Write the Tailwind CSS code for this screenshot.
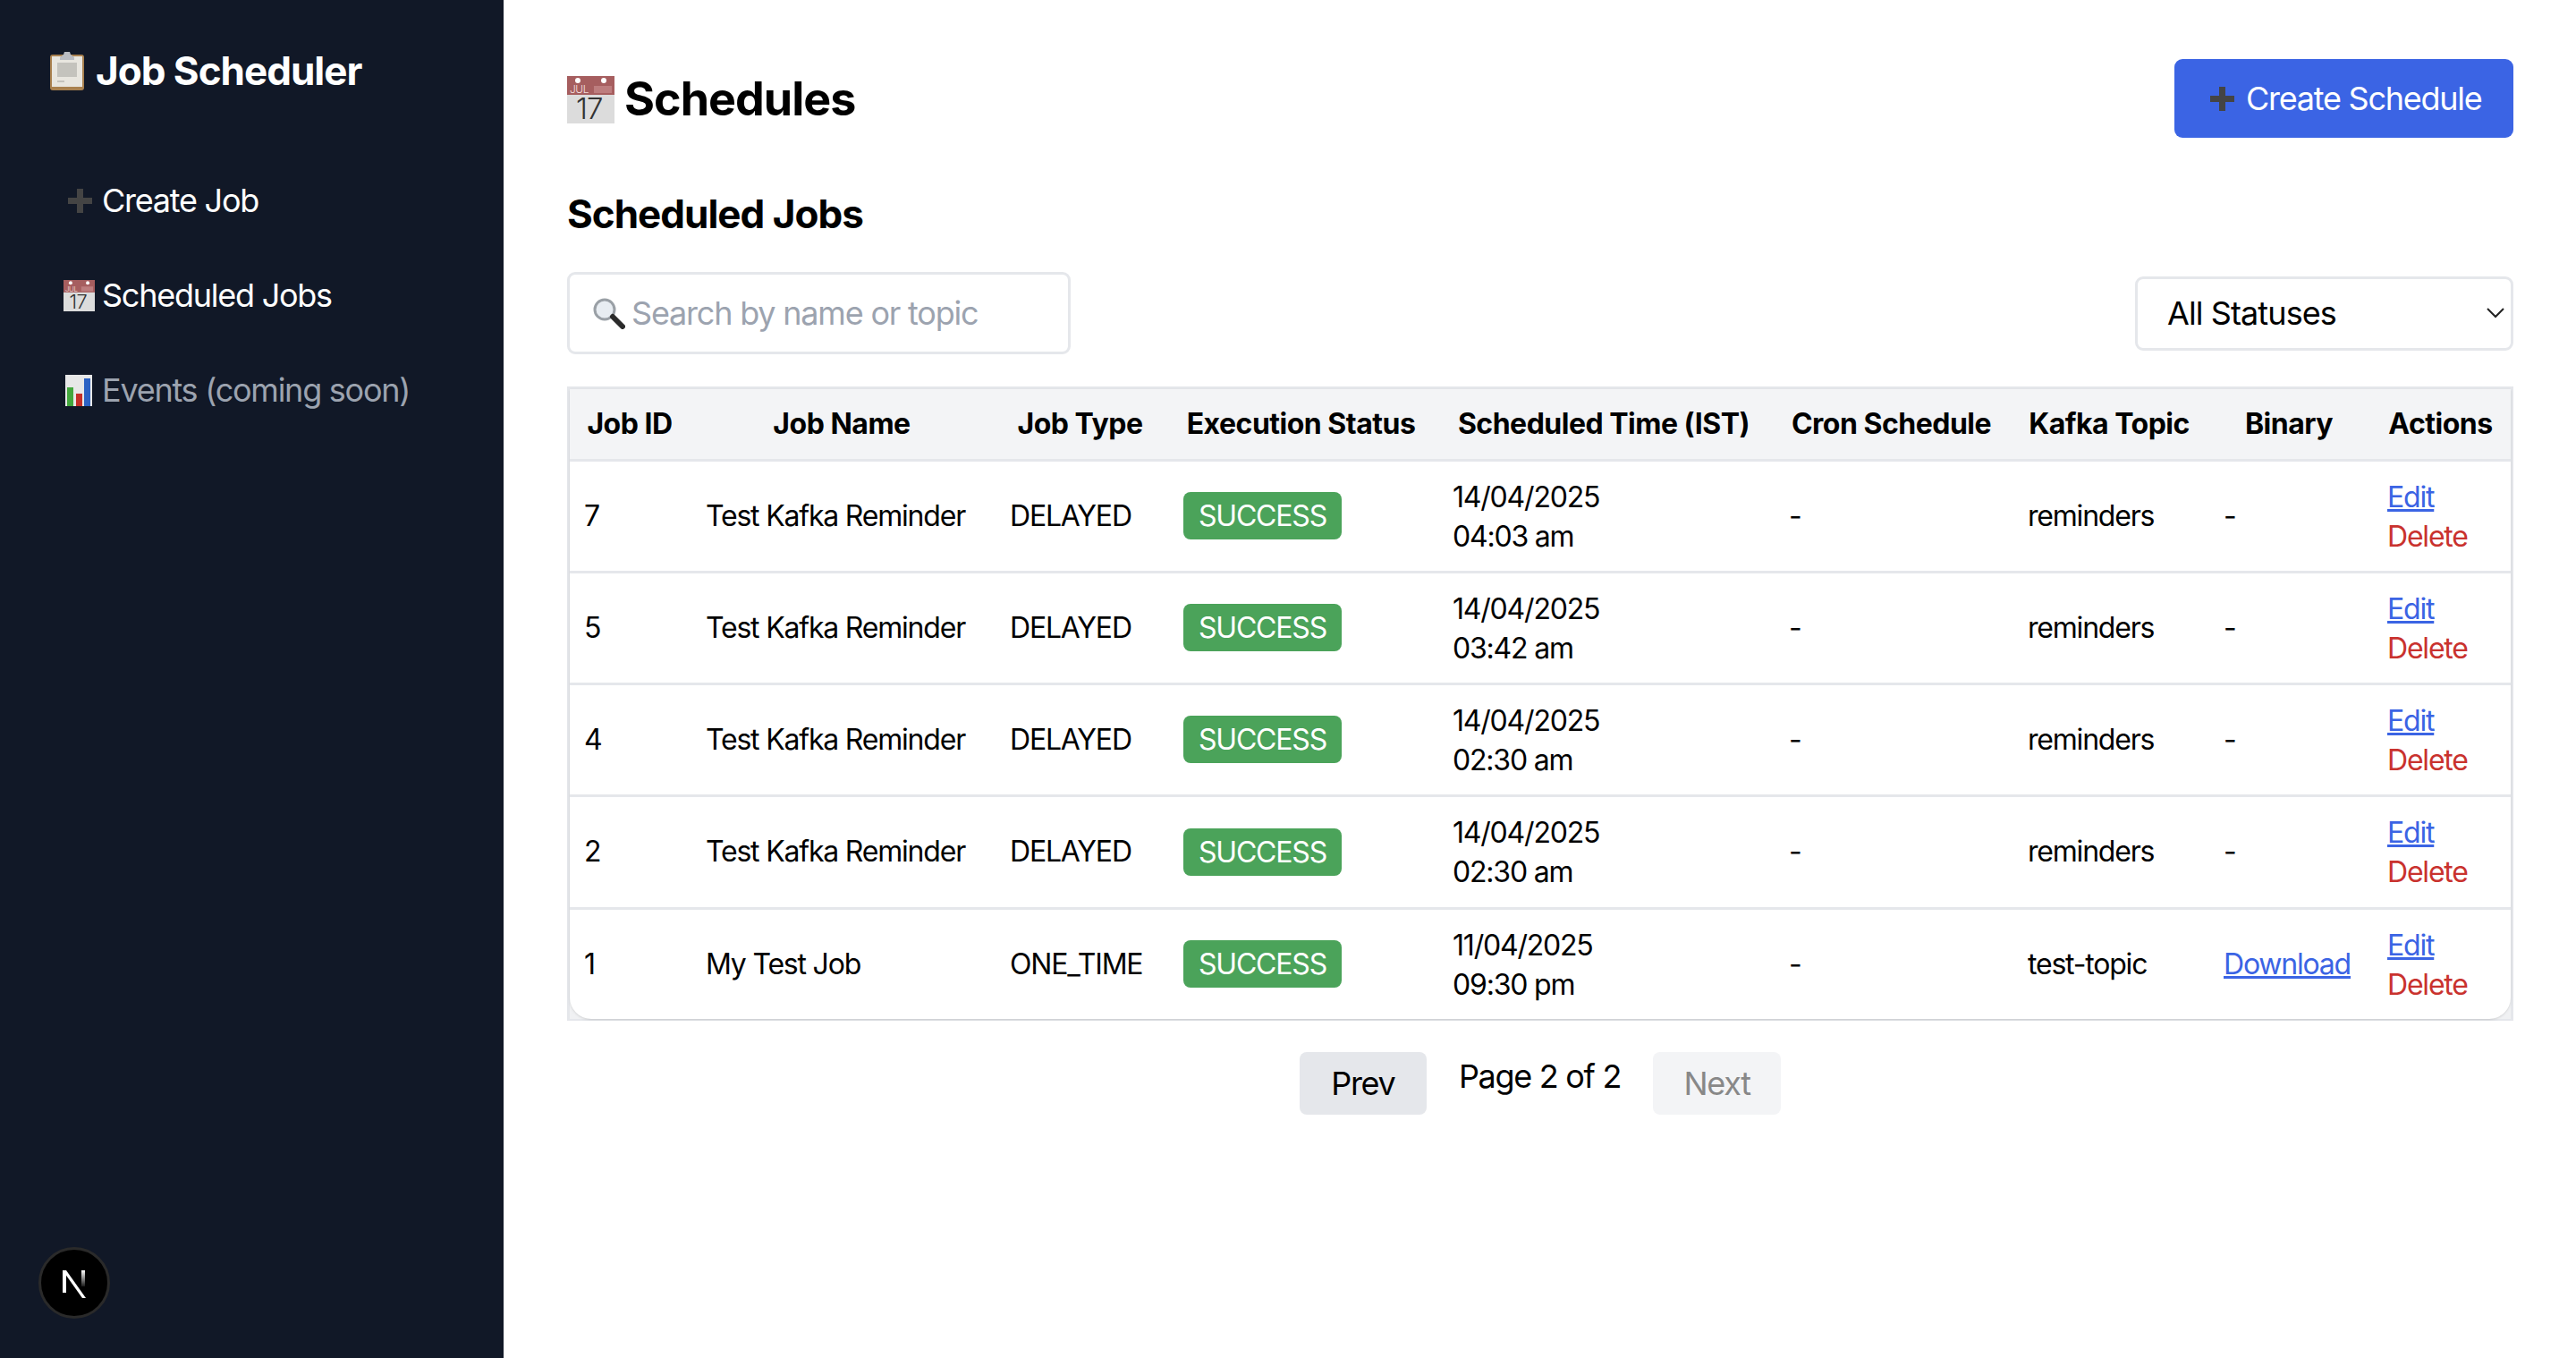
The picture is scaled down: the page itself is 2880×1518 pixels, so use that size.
<!doctype html>
<html lang="en">
<head>
    <meta charset="UTF-8">
    <title>Job Scheduler</title>
    <script src="https://cdn.jsdelivr.net/npm/@tailwindcss/browser@4"></script>
</head>
<body class="bg-white text-black font-['Inter',sans-serif]">
<svg class="hidden">
    <symbol id="calendar" viewBox="0 0 53 53">
        <rect width="53" height="53" fill="#dcdcdc"/>
        <rect width="53" height="21" fill="#a65e5f"/>
        <circle cx="12" cy="5" r="3" fill="#fff"/>
        <circle cx="41" cy="5" r="3" fill="#fff"/>
        <text x="3" y="19" font-size="12" font-weight="300" fill="#f3dede" font-family="Inter" letter-spacing="-0.5">JUL</text>
        <rect x="30" y="11" width="20" height="8" fill="#bd7d7e"/>
        <text x="10" y="48" font-size="33" font-weight="300" fill="#333" font-family="Inter" letter-spacing="-1">17</text>
    </symbol>
    <symbol id="plus" viewBox="0 0 27 27">
        <path d="M10 0h7v10h10v7H17v10h-7V17H0v-7h10z" fill="#444"/>
    </symbol>
</svg>
<div class="flex h-[1518px]">
    <aside class="w-[563px] bg-[#111827] text-white pt-[52px] pl-[56px]">
        <div class="flex items-center h-[54px] gap-[13px] text-[44px] font-bold tracking-[-1px]">
            <svg class="w-[38px] h-[44px]" viewBox="0 0 38 44">
                <rect y="4" width="38" height="40" rx="3" fill="#a9814f"/>
                <rect x="2" y="6" width="34" height="34" fill="#e8e6df"/>
                <rect x="8" y="13" width="22" height="16" fill="#c4c3bd"/>
                <rect x="8" y="33" width="8" height="2" fill="#c4c3bd"/>
                <path d="M11 7l4-3 1-3h6l1 3 4 3v3H11z" fill="#b9bcc2"/>
            </svg>
            <span>Job Scheduler</span>
        </div>
        <nav class="mt-[97px] flex flex-col gap-[64px] text-[36px] leading-[42px] tracking-[-1.25px]">
            <a class="flex items-center h-[42px]">
                <span class="w-[58px] flex justify-end pr-[11px]"><svg class="w-[27px] h-[27px]"><use href="#plus"/></svg></span>
                <span>Create Job</span>
            </a>
            <a class="flex items-center h-[42px]">
                <span class="w-[58px] flex justify-end pr-[8px]"><svg class="w-[35px] h-[35px]"><use href="#calendar"/></svg></span>
                <span>Scheduled Jobs</span>
            </a>
            <a class="flex items-center h-[42px] text-[#9ca3af]">
                <span class="w-[58px] flex justify-end pr-[11px]">
                    <svg class="w-[30px] h-[35px]" viewBox="0 0 30 35">
                        <rect width="30" height="35" fill="#e8e8e8"/>
                        <rect x="2" y="14" width="7" height="21" fill="#43a73d"/>
                        <rect x="12" y="21" width="7" height="14" fill="#c62f28"/>
                        <rect x="21" y="4" width="7" height="31" fill="#2c62c4"/>
                    </svg>
                </span>
                <span>Events (coming soon)</span>
            </a>
        </nav>
    </aside>

    <main class="flex-1 pt-[66px] pl-[71px] pr-[70px]">
        <div class="flex justify-between items-center h-[88px]">
            <h1 class="flex items-center gap-[11px] text-[52px] font-bold tracking-[-1px]">
                <svg class="w-[53px] h-[53px] mt-[2px]"><use href="#calendar"/></svg>
                <span class="mt-[2px]">Schedules</span>
            </h1>
            <button class="flex items-center gap-[13px] h-[88px] w-[379px] pl-[40px] bg-[#3b64e4] text-white text-[36px] tracking-[-1.25px] rounded-[9px]">
                <svg class="w-[27px] h-[27px]"><use href="#plus"/></svg>
                <span>Create Schedule</span>
            </button>
        </div>

        <h2 class="mt-[58px] text-[44px] leading-[54px] font-bold tracking-[-1px]">Scheduled Jobs</h2>

        <div class="mt-[38px] flex justify-between items-center">
            <div class="flex items-center w-[563px] h-[92px] pl-[26px] gap-[7px] border-[3px] border-[#e5e7eb] rounded-[9px]">
                <svg class="w-[36px] h-[35px]" viewBox="0 0 36 35">
                    <circle cx="13" cy="13" r="11" fill="#e8edf2" stroke="#9aa0a6" stroke-width="3"/>
                    <path d="M22 21l11 11" stroke="#2b2b2b" stroke-width="6" stroke-linecap="round"/>
                </svg>
                <input class="w-[440px] text-[36px] tracking-[-1.2px] outline-none placeholder:text-[#9ca3af]" placeholder="Search by name or topic">
            </div>
            <div class="relative">
                <select class="appearance-none block w-[423px] h-[83px] pl-[33px] text-[36px] tracking-[-0.9px] bg-white border-[3px] border-[#e5e7eb] rounded-[9px]">
                    <option>All Statuses</option>
                </select>
                <svg class="absolute right-[10px] top-[35px] w-[20px] h-[12px]" viewBox="0 0 20 12" fill="none" stroke="#222" stroke-width="2"><path d="M1 1l9 9 9-9"/></svg>
            </div>
        </div>

        <div class="mt-[36px] border-x-[3px] border-t-[3px] border-b-[2px] border-[#e5e7eb] bg-[#f0f1f3]">
            <div class="bg-white rounded-br-[24px] rounded-bl-[24px] overflow-hidden shadow-sm">
                <table class="w-[2170px] table-fixed border-collapse text-[32px] leading-[44px] tracking-[-1.2px]">
                    <colgroup>
                        <col class="w-[134px]"><col class="w-[340px]"><col class="w-[193px]"><col class="w-[301px]"><col class="w-[376px]"><col class="w-[267px]"><col class="w-[220px]"><col class="w-[182px]"><col class="w-[157px]">
                    </colgroup>
                    <thead class="bg-[#f3f4f6] border-b-[3px] border-[#e5e7eb] h-[79px]">
                        <tr class="tracking-[-0.5px]">
                            <th class="font-bold">Job ID</th>
                            <th class="font-bold">Job Name</th>
                            <th class="font-bold">Job Type</th>
                            <th class="font-bold">Execution Status</th>
                            <th class="font-bold">Scheduled Time (IST)</th>
                            <th class="font-bold">Cron Schedule</th>
                            <th class="font-bold">Kafka Topic</th>
                            <th class="font-bold">Binary</th>
                            <th class="font-bold">Actions</th>
                        </tr>
                    </thead>
                    <tbody>
                        <tr class="h-[125px] border-b-[3px] border-[#e5e7eb]">
                            <td class="pl-[16px]">7</td>
                            <td class="pl-[18px]">Test Kafka Reminder</td>
                            <td class="pl-[18px]">DELAYED</td>
                            <td class="pl-[19px]"><span class="inline-block w-[177px] h-[53px] leading-[53px] text-center bg-[#4ba35a] text-white rounded-[8px]">SUCCESS</span></td>
                            <td class="pl-[19px] pt-[2px]">14/04/2025<br>04:03 am</td>
                            <td class="pl-[19px]">-</td>
                            <td class="pl-[19px]">reminders</td>
                            <td class="pl-[18px]">-</td>
                            <td class="pl-[19px] pt-[2px]"><a class="block text-[#3b64e4] underline">Edit</a><a class="block text-[#c9322e]">Delete</a></td>
                        </tr>
                        <tr class="h-[125px] border-b-[3px] border-[#e5e7eb]">
                            <td class="pl-[16px]">5</td>
                            <td class="pl-[18px]">Test Kafka Reminder</td>
                            <td class="pl-[18px]">DELAYED</td>
                            <td class="pl-[19px]"><span class="inline-block w-[177px] h-[53px] leading-[53px] text-center bg-[#4ba35a] text-white rounded-[8px]">SUCCESS</span></td>
                            <td class="pl-[19px] pt-[2px]">14/04/2025<br>03:42 am</td>
                            <td class="pl-[19px]">-</td>
                            <td class="pl-[19px]">reminders</td>
                            <td class="pl-[18px]">-</td>
                            <td class="pl-[19px] pt-[2px]"><a class="block text-[#3b64e4] underline">Edit</a><a class="block text-[#c9322e]">Delete</a></td>
                        </tr>
                        <tr class="h-[125px] border-b-[3px] border-[#e5e7eb]">
                            <td class="pl-[16px]">4</td>
                            <td class="pl-[18px]">Test Kafka Reminder</td>
                            <td class="pl-[18px]">DELAYED</td>
                            <td class="pl-[19px]"><span class="inline-block w-[177px] h-[53px] leading-[53px] text-center bg-[#4ba35a] text-white rounded-[8px]">SUCCESS</span></td>
                            <td class="pl-[19px] pt-[2px]">14/04/2025<br>02:30 am</td>
                            <td class="pl-[19px]">-</td>
                            <td class="pl-[19px]">reminders</td>
                            <td class="pl-[18px]">-</td>
                            <td class="pl-[19px] pt-[2px]"><a class="block text-[#3b64e4] underline">Edit</a><a class="block text-[#c9322e]">Delete</a></td>
                        </tr>
                        <tr class="h-[126px] border-b-[3px] border-[#e5e7eb]">
                            <td class="pl-[16px]">2</td>
                            <td class="pl-[18px]">Test Kafka Reminder</td>
                            <td class="pl-[18px]">DELAYED</td>
                            <td class="pl-[19px]"><span class="inline-block w-[177px] h-[53px] leading-[53px] text-center bg-[#4ba35a] text-white rounded-[8px]">SUCCESS</span></td>
                            <td class="pl-[19px] pt-[2px]">14/04/2025<br>02:30 am</td>
                            <td class="pl-[19px]">-</td>
                            <td class="pl-[19px]">reminders</td>
                            <td class="pl-[18px]">-</td>
                            <td class="pl-[19px] pt-[2px]"><a class="block text-[#3b64e4] underline">Edit</a><a class="block text-[#c9322e]">Delete</a></td>
                        </tr>
                        <tr class="h-[124px]">
                            <td class="pl-[16px]">1</td>
                            <td class="pl-[18px]">My Test Job</td>
                            <td class="pl-[18px]">ONE_TIME</td>
                            <td class="pl-[19px]"><span class="inline-block w-[177px] h-[53px] leading-[53px] text-center bg-[#4ba35a] text-white rounded-[8px]">SUCCESS</span></td>
                            <td class="pl-[19px] pt-[2px]">11/04/2025<br>09:30 pm</td>
                            <td class="pl-[19px]">-</td>
                            <td class="pl-[19px]">test-topic</td>
                            <td class="pl-[18px]"><a class="text-[#3b64e4] underline">Download</a></td>
                            <td class="pl-[19px] pt-[2px]"><a class="block text-[#3b64e4] underline">Edit</a><a class="block text-[#c9322e]">Delete</a></td>
                        </tr>
                    </tbody>
                </table>
            </div>
        </div>

        <div class="mt-[35px] flex justify-center gap-[36px] text-[36px] tracking-[-1.3px]">
            <button class="w-[142px] h-[70px] bg-[#e5e7eb] rounded-[8px]">Prev</button>
            <span class="leading-[54px]">Page 2 of 2</span>
            <button class="w-[143px] h-[70px] bg-[#f3f4f6] text-[#888] rounded-[8px]">Next</button>
        </div>
    </main>
</div>

<div class="fixed left-[43px] top-[1394px] w-[80px] h-[80px] rounded-full bg-black border-[3px] border-[#2a2a2a] flex items-center justify-center">
    <svg class="w-[30px] h-[34px]" viewBox="0 0 30 34" fill="none">
        <defs><linearGradient id="fade" x1="0" y1="0" x2="0" y2="1"><stop offset="0" stop-color="#fff"/><stop offset="1" stop-color="#fff" stop-opacity="0.1"/></linearGradient></defs>
        <path d="M2 3h4v25H2z" fill="#fff"/>
        <path d="M2 3h4l22 31-4 0z" fill="#fff"/>
        <path d="M23 3h4v18h-4z" fill="url(#fade)"/>
    </svg>
</div>
</body>
</html>
